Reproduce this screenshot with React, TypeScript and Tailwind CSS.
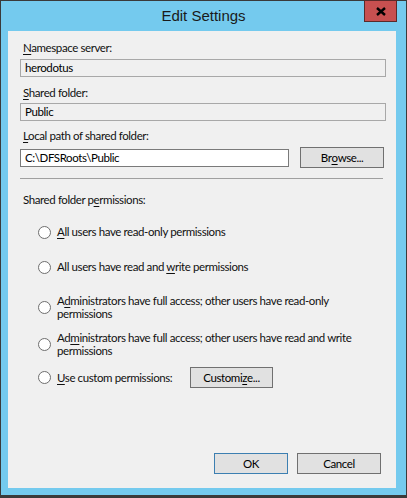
import React from "react";

const font = { fontFamily: 'Lato, "Liberation Sans", Arial, sans-serif' };

function Key({ children }: { children: React.ReactNode }) {
  return <span className="underline underline-offset-2 decoration-1">{children}</span>;
}

function Field({ value, editable = false }: { value: string; editable?: boolean }) {
  return (
    <div
      className={`h-[18px] border flex items-center px-[4px] text-black ${
        editable ? "bg-white border-[#7a7a7a]" : "bg-[#f0f0f0] border-[#a8a8a8]"
      }`}
    >
      {value}
    </div>
  );
}

function Button({ children, primary = false, className = "" }: { children: React.ReactNode; primary?: boolean; className?: string }) {
  return (
    <div
      className={`h-[21px] flex items-center justify-center bg-[#e1e1e1] border text-black ${
        primary ? "border-[#3c7fb1]" : "border-[#707070]"
      } ${className}`}
    >
      {children}
    </div>
  );
}

function Radio({ checked = false }: { checked?: boolean }) {
  return (
    <div className="w-[13px] h-[13px] rounded-full border border-[#6e6e6e] bg-white flex items-center justify-center shrink-0">
      {checked && <div className="w-[7px] h-[7px] rounded-full bg-[#111]" />}
    </div>
  );
}

export default function App() {
  return (
    <div className="w-[407px] h-[498px] bg-[#3a3a3a] p-[1px] pb-[3px]" style={font}>
      <div className="w-full h-full bg-[#74caee] flex flex-col">
        {/* title bar */}
        <div className="h-[30px] relative flex items-center justify-center shrink-0">
          <span className="text-[15px] text-[#1a1a1a] mt-[1px]" style={{ fontFamily: '"Liberation Sans", Arial, sans-serif' }}>
            Edit Settings
          </span>
          <div className="absolute right-[9px] top-[-1px] w-[33px] h-[22px] bg-[#c75050] border border-[#5a2a2a] flex items-center justify-center">
            <svg width="10" height="9" viewBox="0 0 10 9">
              <path d="M1 1 L9 8 M9 1 L1 8" stroke="#000" strokeWidth="2.4" />
            </svg>
          </div>
        </div>

        {/* client area */}
        <div className="ml-[7px] w-[388px] h-[457px] bg-[#f0f0f0] px-[12px] pt-[9px] flex flex-col text-[11.5px] tracking-[-0.4px] text-[#111] whitespace-nowrap">
          <div className="pl-[3px] h-[16px] leading-[16px]">
            <Key>N</Key>amespace server:
          </div>
          <div className="mt-[3px] w-[366px]">
            <Field value="herodotus" />
          </div>

          <div className="pl-[3px] h-[16px] leading-[16px] mt-[8px]">
            <Key>S</Key>hared folder:
          </div>
          <div className="mt-[2px] w-[366px]">
            <Field value="Public" />
          </div>

          <div className="pl-[3px] h-[16px] leading-[16px] mt-[7px]">
            <Key>L</Key>ocal path of shared folder:
          </div>
          <div className="mt-[3px] flex items-center gap-[11px]">
            <div className="w-[270px]">
              <Field value="C:\DFSRoots\Public" editable />
            </div>
            <Button className="w-[84px]">
              Br<Key>o</Key>wse...
            </Button>
          </div>

          <div className="mt-[10px] h-px bg-[#a0a0a0] w-[363px]" />

          <div className="pl-[3px] h-[16px] leading-[16px] mt-[13px]">
            Shared folder p<Key>e</Key>rmissions:
          </div>

          <div className="mt-[16px] pl-[18px] flex flex-col">
            <div className="flex items-center gap-[6px] h-[16px]">
              <Radio />
              <span><Key>A</Key>ll users have read-only permissions</span>
            </div>
            <div className="flex items-center gap-[6px] h-[16px] mt-[19px]">
              <Radio />
              <span>All users have read and <Key>w</Key>rite permissions</span>
            </div>
            <div className="flex items-center gap-[6px] mt-[19px]">
              <Radio />
              <span className="leading-[13px]">
                A<Key>d</Key>ministrators have full access; other users have read-only
                <br />
                permissions
              </span>
            </div>
            <div className="flex items-center gap-[6px] mt-[11px]">
              <Radio />
              <span className="leading-[13px]">
                Ad<Key>m</Key>inistrators have full access; other users have read and write
                <br />
                permissions
              </span>
            </div>
            <div className="flex items-center mt-[10px]">
              <Radio />
              <span className="ml-[6px] w-[133px]"><Key>U</Key>se custom permissions:</span>
              <Button className="w-[83px]">
                Customi<Key>z</Key>e...
              </Button>
            </div>
          </div>

          <div className="mt-auto mb-[14px] flex justify-end gap-[9px] pr-[3px]">
            <Button primary className="w-[74px]">OK</Button>
            <Button className="w-[84px]">Cancel</Button>
          </div>
        </div>
      </div>
    </div>
  );
}
